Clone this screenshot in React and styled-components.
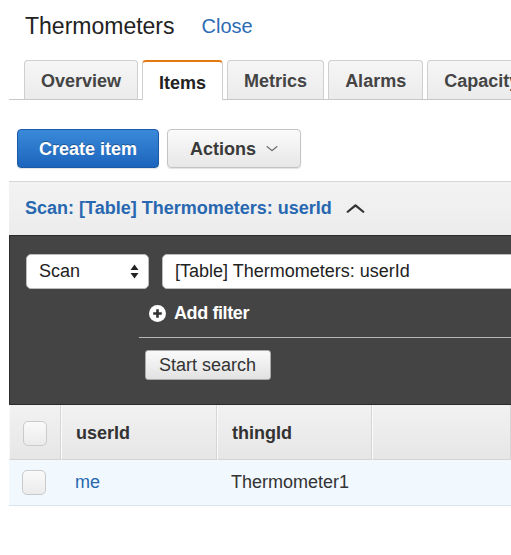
import React from "react";
import styled, { createGlobalStyle } from "styled-components";

const GlobalStyle = createGlobalStyle`
	html, body {
		margin: 0;
		padding: 0;
		background: #fff;
	}

	body {
		font-family: "Liberation Sans", Arial, sans-serif;
		color: #333;
	}
`;

const Page = styled.div`
	width: 511px;
	height: 555px;
	overflow: hidden;
	padding-left: 9px;
	box-sizing: border-box;
`;

const TitleRow = styled.div`
	display: flex;
	align-items: center;
	gap: 27px;
	height: 52px;
	padding-left: 16px;
`;

const Title = styled.h1`
	margin: 0;
	font-size: 23px;
	font-weight: normal;
	color: #222;
`;

const CloseLink = styled.a`
	font-size: 20px;
	color: #2b6cb5;
	cursor: pointer;
`;

const Tabs = styled.div`
	display: flex;
	gap: 4px;
	margin-top: 8px;
	padding-left: 15px;
	height: 39px;
	border-bottom: 1px solid #c8c8c8;
	white-space: nowrap;
`;

const Tab = styled.div`
	display: flex;
	align-items: center;
	padding: 0 16px;
	font-size: 18px;
	font-weight: bold;
	color: ${(props) => (props.active ? "#222" : "#444")};
	border: 1px solid #cfcfcf;
	border-bottom: none;
	border-top: ${(props) => (props.active ? "2px solid #e47911" : "1px solid #cfcfcf")};
	border-radius: 4px 4px 0 0;
	background: ${(props) =>
		props.active ? "#fff" : "linear-gradient(#f6f6f6, #ebebeb)"};
	height: ${(props) => (props.active ? "40px" : "39px")};
	box-sizing: border-box;
	padding-top: ${(props) => (props.active ? "5px" : "3px")};
`;

const Toolbar = styled.div`
	display: flex;
	gap: 8px;
	margin-top: 29px;
	padding-left: 8px;
	margin-bottom: 13px;
`;

const Button = styled.button`
	display: flex;
	align-items: center;
	justify-content: center;
	gap: 10px;
	height: 39px;
	width: ${(props) => props.width}px;
	border-radius: 4px;
	font-family: "Liberation Sans", Arial, sans-serif;
	font-size: 18px;
	font-weight: bold;
	cursor: pointer;
	padding-top: 2px;
	border: 1px solid ${(props) => (props.primary ? "#1a5aa6" : "#c4c4c4")};
	color: ${(props) => (props.primary ? "#fff" : "#3a3a3a")};
	background: ${(props) =>
		props.primary
			? "linear-gradient(#3a8ad9, #1d64bd)"
			: "linear-gradient(#fbfbfb, #e7e7e7)"};
	text-shadow: ${(props) =>
		props.primary ? "0 -1px 0 rgba(0, 0, 0, 0.3)" : "none"};
	box-shadow: 0 1px 1px rgba(0, 0, 0, 0.12);
`;

const ScanHeader = styled.div`
	display: flex;
	align-items: center;
	gap: 14px;
	height: 53px;
	padding-left: 16px;
	border-top: 1px solid #d6d6d6;
	background: linear-gradient(#f3f3f3, #ececec);
	font-size: 18px;
	font-weight: bold;
	color: #2868b0;
	white-space: nowrap;
`;

const Panel = styled.div`
	background: #444;
	border: 1px solid #2b2b2b;
	border-right: none;
	padding: 18px 0 24px 16px;
	overflow: hidden;
`;

const QueryRow = styled.div`
	display: flex;
	gap: 13px;
`;

const Field = styled.div`
	display: flex;
	align-items: center;
	justify-content: space-between;
	height: 35px;
	box-sizing: border-box;
	padding: 0 9px 0 12px;
	background: #fff;
	border: 1px solid #bcbcbc;
	border-radius: 5px;
	font-size: 18px;
	color: #222;
	white-space: nowrap;
	width: ${(props) => (props.wide ? "auto" : "123px")};
	flex: ${(props) => (props.wide ? "1 0 400px" : "none")};
`;

const FilterArea = styled.div`
	margin-left: 113px;
`;

const AddFilter = styled.div`
	display: flex;
	align-items: center;
	gap: 8px;
	height: 48px;
	padding-left: 10px;
	border-bottom: 1px solid #b8b8b8;
	font-size: 18px;
	font-weight: bold;
	color: #fff;
	letter-spacing: -0.4px;
`;

const SearchButton = styled.button`
	margin: 12px 0 0 6px;
	height: 30px;
	padding: 0 14px 0 13px;
	border: 1px solid #aaa;
	border-radius: 3px;
	background: linear-gradient(#fafafa, #e2e2e2);
	font-family: "Liberation Sans", Arial, sans-serif;
	font-size: 18px;
	color: #333;
	cursor: pointer;
`;

const Table = styled.div`
	display: grid;
	grid-template-columns: 52px 156px 155px 1fr;
`;

const HeadCell = styled.div`
	display: flex;
	align-items: center;
	height: 55px;
	box-sizing: border-box;
	padding-left: ${(props) => (props.check ? "13px" : "14px")};
	padding-top: 2px;
	background: linear-gradient(#f2f2f2, #e6e6e6);
	border-right: 1px solid #d6d6d6;
	border-left: 1px solid #fafafa;
	border-bottom: 1px solid #d4d4d4;
	font-size: 18px;
	font-weight: bold;
	color: #333;
`;

const Cell = styled.div`
	display: flex;
	align-items: center;
	height: 46px;
	box-sizing: border-box;
	padding-left: ${(props) => (props.check ? "13px" : "14px")};
	background: #f1f8fe;
	border-bottom: 1px solid #dbe5ee;
	font-size: 18px;
	color: ${(props) => (props.link ? "#2868b0" : "#333")};
`;

const Checkbox = styled.span`
	display: block;
	width: 24px;
	height: 25px;
	box-sizing: border-box;
	border: 1px solid #cacaca;
	border-radius: 5px;
	background: linear-gradient(#fafafa, #ebebeb);
`;

function Chevron({ up, size, stroke, color }) {
	return (
		<svg width={size} height={size / 2.2} viewBox="0 0 22 10">
			<path
				d={up ? "M2 9 L11 1.5 L20 9" : "M2 1 L11 8.5 L20 1"}
				fill="none"
				stroke={color}
				strokeWidth={stroke}
				strokeLinecap="round"
				strokeLinejoin="round"
			/>
		</svg>
	);
}

function SortArrows() {
	return (
		<svg width="9" height="15" viewBox="0 0 9 15">
			<path d="M4.5 0.5 L8.5 6 L0.5 6 Z" fill="#222" />
			<path d="M4.5 14.5 L8.5 9 L0.5 9 Z" fill="#222" />
		</svg>
	);
}

function PlusCircle() {
	return (
		<svg width="17" height="17" viewBox="0 0 17 17">
			<circle cx="8.5" cy="8.5" r="8.5" fill="#fff" />
			<path d="M8.5 4.2 V12.8 M4.2 8.5 H12.8" stroke="#333" strokeWidth="2.6" />
		</svg>
	);
}

const tabs = ["Overview", "Items", "Metrics", "Alarms", "Capacity"];

export default function App() {
	return (
		<Page>
			<GlobalStyle />
			<TitleRow>
				<Title>Thermometers</Title>
				<CloseLink>Close</CloseLink>
			</TitleRow>
			<Tabs>
				{tabs.map((t) => (
					<Tab key={t} active={t === "Items"}>
						{t}
					</Tab>
				))}
			</Tabs>
			<Toolbar>
				<Button primary width={142}>
					Create item
				</Button>
				<Button width={134}>
					Actions
					<Chevron size={12} stroke={2} color="#555" />
				</Button>
			</Toolbar>
			<ScanHeader>
				Scan: [Table] Thermometers: userId
				<Chevron up size={19} stroke={2.6} color="#333" />
			</ScanHeader>
			<Panel>
				<QueryRow>
					<Field>
						Scan
						<SortArrows />
					</Field>
					<Field wide>[Table] Thermometers: userId</Field>
				</QueryRow>
				<FilterArea>
					<AddFilter>
						<PlusCircle />
						Add filter
					</AddFilter>
					<SearchButton>Start search</SearchButton>
				</FilterArea>
			</Panel>
			<Table>
				<HeadCell check>
					<Checkbox />
				</HeadCell>
				<HeadCell>userId</HeadCell>
				<HeadCell>thingId</HeadCell>
				<HeadCell />
				<Cell check>
					<Checkbox />
				</Cell>
				<Cell link>me</Cell>
				<Cell>Thermometer1</Cell>
				<Cell />
			</Table>
		</Page>
	);
}
